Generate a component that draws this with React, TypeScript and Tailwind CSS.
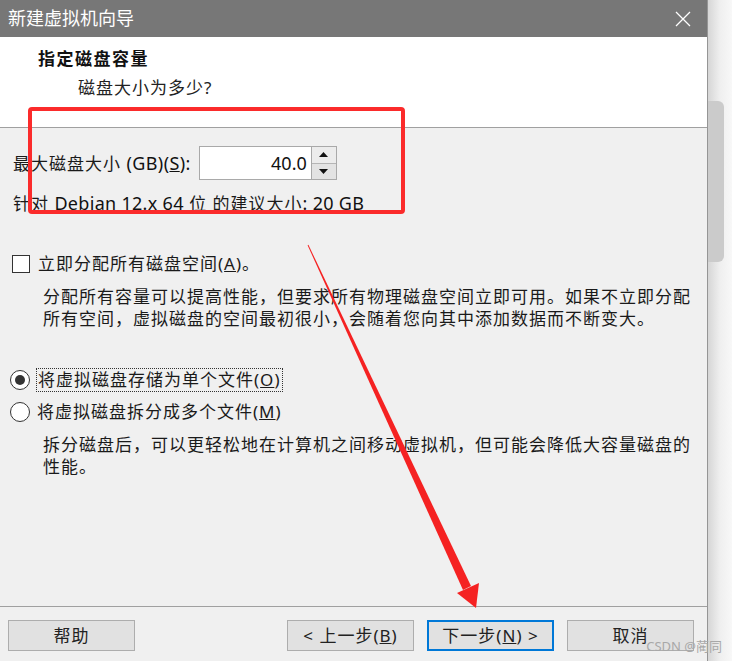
import React from "react";

const cjk = "font-['Noto_Sans','Noto_Sans_CJK_SC',sans-serif]";

function Spinner() {
  return (
    <div className="flex h-[34px] w-[25px] flex-col border border-l-0 border-[#a9a9a9] bg-[#e8e8e8]">
      <div className="flex flex-1 items-center justify-center border-b border-[#b5b5b5] bg-[#ececec]">
        <svg width="9" height="5" viewBox="0 0 9 5">
          <polygon points="0,5 9,5 4.5,0" fill="#111" />
        </svg>
      </div>
      <div className="flex flex-1 items-center justify-center bg-[#e3e3e3]">
        <svg width="9" height="5" viewBox="0 0 9 5">
          <polygon points="0,0 9,0 4.5,5" fill="#111" />
        </svg>
      </div>
    </div>
  );
}

function Radio({ checked }: { checked?: boolean }) {
  return (
    <div className="flex h-[20px] w-[20px] shrink-0 items-center justify-center rounded-full border border-[#333] bg-white">
      {checked && <div className="h-[10px] w-[10px] rounded-full bg-[#333]" />}
    </div>
  );
}

function Btn({ children, primary }: { children: React.ReactNode; primary?: boolean }) {
  return (
    <div
      className={
        primary
          ? "flex h-[31px] w-[127px] items-center justify-center border-2 border-[#0078d7] bg-[#e1e1e1] text-[17px] text-[#222]"
          : "flex h-[31px] w-[127px] items-center justify-center border border-[#adadad] bg-[#e1e1e1] text-[17px] text-[#222]"
      }
    >
      {children}
    </div>
  );
}

export default function App() {
  return (
    <div className={`relative flex h-[661px] w-[732px] overflow-hidden ${cjk}`}>
      <div className="flex w-[708px] flex-col border-r border-[#959595]">
        <div className="flex h-[37px] items-center justify-between bg-[#777777] pl-[8px] pr-[16px]">
          <span className="text-[18px] text-white">新建虚拟机向导</span>
          <svg width="16" height="16" viewBox="0 0 16 16">
            <path d="M1 1 L15 15 M15 1 L1 15" stroke="#fff" strokeWidth="1.3" />
          </svg>
        </div>

        <div className="h-[91px] border-b border-[#a0a0a0] bg-white pl-[38px] pt-[11px]">
          <p className="text-[17px] font-bold leading-[22px] tracking-[1.5px] text-[#111]">指定磁盘容量</p>
          <p className="ml-[40px] mt-[7px] text-[17px] leading-[22px] tracking-[1px] text-[#222]">磁盘大小为多少?</p>
        </div>

        <div className="flex flex-1 flex-col bg-[#f0f0f0] text-[17px] tracking-[1px] text-[#1a1a1a]">
          <div className="flex-1 pl-[13px] pt-[18px]">
            <div className="flex h-[34px] items-center">
              <span>
                最大磁盘大小{" "}
                <span className="text-[18px] tracking-[0.4px] text-[#111]">
                  (GB)(<span className="underline">S</span>):
                </span>
              </span>
              <div className="ml-[8px] flex h-[34px] w-[113px] items-center justify-end border border-[#a9a9a9] bg-white pr-[4px] text-[18px] tracking-normal text-[#111]">
                40.0
              </div>
              <Spinner />
            </div>
            <p className="mt-[12px] h-[22px] leading-[22px]">
              针对 <span className="text-[18px] tracking-[0.3px] text-[#111]">Debian 12.x 64</span> 位 的建议大小
              <span className="text-[18px] tracking-[0.3px] text-[#111]">: 20 GB</span>
            </p>

            <div className="-ml-px mt-[39px] flex h-[22px] items-center gap-[8px]">
              <div className="h-[18px] w-[18px] border border-[#333] bg-white" />
              <span>
                立即分配所有磁盘空间(<span className="underline">A</span>)。
              </span>
            </div>
            <p className="ml-[30px] mt-[11px] w-[656px] leading-[22px]">
              分配所有容量可以提高性能，但要求所有物理磁盘空间立即可用。如果不立即分配所有空间，虚拟磁盘的空间最初很小，会随着您向其中添加数据而不断变大。
            </p>

            <div className="-ml-[3px] mt-[39px] flex h-[22px] items-center gap-[6px]">
              <Radio checked />
              <span className="border border-dotted border-[#333] px-px leading-[22px]">
                将虚拟磁盘存储为单个文件(<span className="underline">O</span>)
              </span>
            </div>
            <div className="-ml-[3px] mt-[10px] flex h-[22px] items-center gap-[7px]">
              <Radio />
              <span>
                将虚拟磁盘拆分成多个文件(<span className="underline">M</span>)
              </span>
            </div>
            <p className="ml-[30px] mt-[11px] w-[656px] leading-[22px]">
              拆分磁盘后，可以更轻松地在计算机之间移动虚拟机，但可能会降低大容量磁盘的性能。
            </p>
          </div>

          <div className="h-[55px] border-t border-[#a0a0a0] pt-[13px]">
            <div className="flex items-center pl-[8px] tracking-[1px]">
              <Btn>帮助</Btn>
              <div className="ml-[152px] flex gap-[13px]">
                <Btn>
                  &lt; 上一步(<span className="underline">B</span>)
                </Btn>
                <Btn primary>
                  下一步(<span className="underline">N</span>) &gt;
                </Btn>
                <Btn>取消</Btn>
              </div>
            </div>
          </div>
        </div>
      </div>

      <div className="flex flex-1 flex-col bg-gradient-to-r from-[#d6d6d6] via-[#efefef] to-[#f8f8f8] pt-[101px]">
        <div className="h-[161px] w-[16px] rounded-r-[6px] bg-[#cbcbcb]" />
      </div>

      <div className="pointer-events-none absolute left-[28px] top-[107px] h-[107px] w-[377px] rounded-[4px] border-[4px] border-[#fb2b2b]" />

      <svg className="pointer-events-none absolute left-0 top-0" width="732" height="661" viewBox="0 0 732 661">
        <polygon points="307.6,245.2 308.4,244.8 471,586 463,590" fill="#f52222" />
        <polygon points="479,583 476,608 457,593" fill="#f52222" />
      </svg>

      <span className="pointer-events-none absolute bottom-[5px] right-[10px] text-[13px] text-[#a8a8a8]">
        CSDN @蔺同
      </span>
    </div>
  );
}
